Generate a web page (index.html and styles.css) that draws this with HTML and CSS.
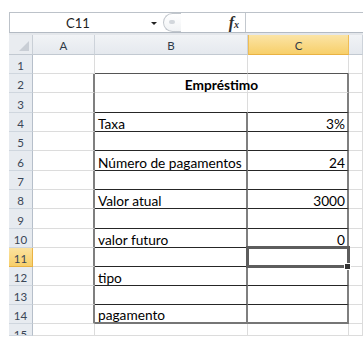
FILE: index.html
```html
<!DOCTYPE html>
<html lang="pt">
<head>
<meta charset="utf-8">
<link rel="stylesheet" href="styles.css">
</head>
<body>
<div class="app">
  <div class="fbar">
    <div class="namebox"><span class="ref">C11</span><span class="arrow"></span></div>
    <div class="fxzone">
      <span class="pill"><span class="mark"></span></span>
      <span class="fx">f<span class="fxx">x</span></span>
    </div>
    <div class="input"></div>
  </div>
  <div class="gap"></div>
  <div class="sheet">
    <div class="corner"><svg width="10" height="10" viewBox="0 0 10 10"><polygon points="10,0 10,10 0,10" fill="#c9ced5"/></svg></div>
    <div class="ch">A</div>
    <div class="ch">B</div>
    <div class="ch hl">C</div>
    <div class="ch"></div>

    <div class="rh">1</div><div class="c"></div><div class="c top"></div><div class="c top"></div><div class="c"></div>
    <div class="rh">2</div><div class="c tl"></div><div class="c title">Empréstimo</div><div class="c"></div>
    <div class="rh">3</div><div class="c tl"></div><div class="c hb"></div><div class="c hb vr"></div><div class="c"></div>
    <div class="rh">4</div><div class="c tl"></div><div class="c hb vr">Taxa</div><div class="c hb vr num">3%</div><div class="c"></div>
    <div class="rh">5</div><div class="c tl"></div><div class="c hb vr"></div><div class="c hb vr"></div><div class="c"></div>
    <div class="rh">6</div><div class="c tl"></div><div class="c hb vr">Número de pagamentos</div><div class="c hb vr num">24</div><div class="c"></div>
    <div class="rh">7</div><div class="c tl"></div><div class="c hb vr"></div><div class="c hb vr"></div><div class="c"></div>
    <div class="rh">8</div><div class="c tl"></div><div class="c hb vr">Valor atual</div><div class="c hb vr num">3000</div><div class="c"></div>
    <div class="rh">9</div><div class="c tl"></div><div class="c hb vr"></div><div class="c hb vr"></div><div class="c"></div>
    <div class="rh">10</div><div class="c tl"></div><div class="c hb vr">valor futuro</div><div class="c hb vr num">0</div><div class="c"></div>
    <div class="rh hl">11</div><div class="c tl"></div><div class="c hb vr"></div><div class="c hb vr sel"></div><div class="c"></div>
    <div class="rh">12</div><div class="c tl"></div><div class="c hb vr">tipo</div><div class="c hb vr"></div><div class="c"></div>
    <div class="rh">13</div><div class="c tl"></div><div class="c hb vr"></div><div class="c hb vr"></div><div class="c"></div>
    <div class="rh">14</div><div class="c tl"></div><div class="c lb vr">pagamento</div><div class="c lb vr"></div><div class="c"></div>
    <div class="rh last">15</div><div class="c"></div><div class="c"></div><div class="c"></div><div class="c"></div>
  </div>
</div>
</body>
</html>
```

FILE: styles.css
```css
html, body {
  margin: 0;
  padding: 0;
  background: #ffffff;
}

.app {
  padding: 12px 0 0 9px;
  font-family: Lato, "Liberation Sans", sans-serif;
}

/* formula bar */
.fbar {
  height: 21px;
  box-sizing: border-box;
  border-top: 1px solid #bcc2c9;
  border-bottom: 1px solid #b3bac3;
  border-left: 1px solid #bcc2c9;
  display: flex;
  background: #ffffff;
}

.namebox {
  width: 153px;
  display: flex;
  align-items: center;
}

.ref {
  width: 136px;
  text-align: center;
  font-size: 13px;
  color: #1e1e1e;
}

.arrow {
  width: 0;
  height: 0;
  margin-left: 5px;
  border-left: 3px solid transparent;
  border-right: 3px solid transparent;
  border-top: 3px solid #222;
  margin-top: 1px;
}

.fxzone {
  width: 82px;
  display: flex;
  align-items: center;
  justify-content: space-between;
  border-right: 1px solid #c3c8ce;
}

.pill {
  width: 18px;
  height: 19px;
  box-sizing: border-box;
  border: 1px solid #c2c7cd;
  border-right: none;
  border-radius: 10px 0 0 10px;
  margin-top: -1px;
  display: flex;
  align-items: center;
  padding-left: 5px;
  background: linear-gradient(#ffffff, #f1f3f5);
}

.mark {
  width: 6px;
  height: 4px;
  border-radius: 2px;
  background: #d3d7dc;
}

.fx {
  font-family: "Liberation Serif", serif;
  font-style: italic;
  font-weight: bold;
  font-size: 16px;
  color: #2e2e2e;
  margin-right: 6px;
  line-height: 1;
}

.fxx {
  font-size: 10px;
}

.input {
  flex: 1;
  background: #ffffff;
}

.gap {
  height: 2px;
  background: #e4e7eb;
}

/* sheet grid */
.sheet {
  display: grid;
  grid-template-columns: 24px 62px 153px 101px 14px;
  grid-template-rows: 20px 19px 19px 20px 19px 19px 20px 19px 19px 20px 19px 19px 19px 19px 19px 12px;
  height: 301px;
  overflow: hidden;
}

.corner {
  background: #e9ecf0;
  border-right: 1px solid #c9cfd6;
  border-bottom: 1px solid #c2c9d1;
  display: flex;
  align-items: flex-end;
  justify-content: flex-end;
  padding: 0 3px 3px 0;
}

.ch {
  background: linear-gradient(#f1f3f6, #e5e9ee);
  border-right: 1px solid #cdd3da;
  border-bottom: 1px solid #c2c9d1;
  display: flex;
  align-items: flex-end;
  justify-content: center;
  font-size: 11.5px;
  line-height: 15px;
  padding-bottom: 1px;
  color: #2f3a47;
}

.ch.hl {
  background: linear-gradient(#fbe4a6, #f7cf6a);
  border-left: 1px solid #efbd55;
  border-right: 1px solid #efbd55;
  border-bottom: 1px solid #e9b243;
}

.rh {
  background: #e7ebf0;
  border-right: 1px solid #b6bfca;
  border-bottom: 1px solid #cfd6de;
  display: flex;
  align-items: flex-end;
  justify-content: center;
  font-size: 11.5px;
  line-height: 15px;
  color: #3a4656;
  overflow: hidden;
}

.rh.last {
  align-items: flex-start;
  padding-top: 3px;
}

.rh.hl {
  background: linear-gradient(#fbe29f, #f7cf6a);
  border-bottom: 1px solid #e9b243;
  border-right: 1px solid #e9b243;
}

.c {
  border-right: 1px solid #dcdcdc;
  border-bottom: 1px solid #dcdcdc;
  display: flex;
  align-items: flex-end;
  padding: 0 2px 0 3px;
  font-size: 13.7px;
  line-height: 15px;
  color: #000;
  white-space: nowrap;
  overflow: visible;
  min-width: 0;
}

.c.top {
  border-bottom: 1px solid #555555;
}

.c.tl {
  border-right: 2px solid #7f7f7f;
}

.c.title {
  grid-column: span 2;
  justify-content: center;
  font-weight: bold;
  border-right: 2px solid #7f7f7f;
  background: linear-gradient(to right, transparent 152px, #e2e2e2 152px, #e2e2e2 153px, transparent 153px);
}

.c.hb {
  border-bottom: 1px solid #262626;
}

.c.lb {
  border-bottom: 2px solid #767676;
}

.c.vr {
  border-right: 2px solid #7f7f7f;
}

.c.num {
  justify-content: flex-end;
}

.c.sel {
  position: relative;
}

.c.sel::after {
  content: "";
  position: absolute;
  left: -2px;
  top: -2px;
  right: -3px;
  bottom: -2px;
  border: 3px solid #5d5d5d;
  z-index: 2;
}

.c.sel::before {
  content: "";
  position: absolute;
  right: -4px;
  bottom: -4px;
  width: 5px;
  height: 5px;
  background: #333;
  border: 1px solid #fff;
  z-index: 3;
}
```
